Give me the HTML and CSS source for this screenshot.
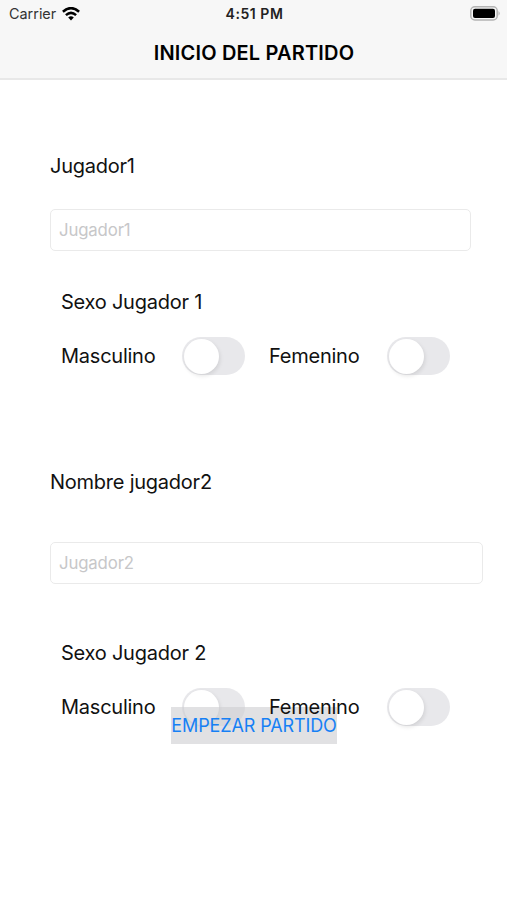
FILE: index.html
```html
<!DOCTYPE html>
<html lang="es">
<head>
<meta charset="utf-8">
<title>Inicio del partido</title>
<link rel="stylesheet" href="styles.css">
</head>
<body>
<header class="top">
  <div class="status">
    <div class="carrier"><span>Carrier</span>
      <svg class="wifi" viewBox="0 0 18 14" width="18" height="14"><g fill="none" stroke="#000" stroke-width="2.5"><path d="M.9 4.7Q9-2.5 17.1 4.7"/><path d="M3.9 8.1Q9 3.6 14.1 8.1"/></g><path d="M6.2 10.6Q9 8.1 11.8 10.6L9 13.4Z"/></svg>
    </div>
    <span class="time">4:51 PM</span>
    <svg class="battery" viewBox="0 0 31 15" width="31" height="15"><rect x=".8" y=".8" width="26.4" height="13.2" rx="4" fill="#f7f7f7" stroke="#b4b4b4" stroke-width="1.5"/><rect x="3" y="2.8" width="22" height="9.2" rx="2"/><path d="M28.5 5Q31 7.4 28.5 9.8Z" fill="#b4b4b4"/></svg>
  </div>
  <h1 class="title">INICIO DEL PARTIDO</h1>
</header>
<main class="form">
  <section class="player first">
    <label class="name" for="p1">Jugador1</label>
    <input class="field" id="p1" type="text" placeholder="Jugador1">
    <h2 class="gender">Sexo Jugador 1</h2>
    <div class="choices">
      <span class="male">Masculino</span><span class="switch"></span>
      <span class="female">Femenino</span><span class="switch"></span>
    </div>
  </section>
  <section class="player second">
    <label class="name" for="p2">Nombre jugador2</label>
    <input class="field" id="p2" type="text" placeholder="Jugador2">
    <h2 class="gender">Sexo Jugador 2</h2>
    <div class="choices">
      <span class="male">Masculino</span><span class="switch"></span>
      <span class="female">Femenino</span><span class="switch"></span>
    </div>
    <button class="start" type="button">EMPEZAR PARTIDO</button>
  </section>
</main>
</body>
</html>
```
FILE: styles.css
```css
* { box-sizing: border-box; }
body {
  margin: 0;
  height: 900px;
  overflow: hidden;
  background: #fff;
  color: #111;
  font: 400 20px/26px Inter, "Liberation Sans", sans-serif;
  letter-spacing: -.24px;
}
.top {
  height: 80px;
  background: #f7f7f7;
  border-bottom: 2px solid #e8e8e8;
}
.status {
  display: grid;
  grid-template-columns: 1fr auto 1fr;
  align-items: center;
  height: 27px;
  padding: 0 6px 0 9px;
  font-size: 14.4px;
  letter-spacing: 0;
}
.carrier { display: flex; align-items: center; gap: 6px; color: #333; }
.wifi { display: block; }
.time { margin-left: -1px; font-size: 14px; font-weight: 600; letter-spacing: .55px; color: #222; }
.battery { justify-self: end; }
.title {
  margin: 13px 0 0;
  padding-left: 1px;
  font-size: 20px;
  line-height: 26px;
  font-weight: 600;
  letter-spacing: .18px;
  text-align: center;
  white-space: nowrap;
  color: #000;
}
.player { position: relative; display: flex; flex-direction: column; padding-left: 50px; }
.first { padding-top: 73px; }
.second { padding-top: 94px; }
.name { height: 26px; white-space: nowrap; }
.field {
  width: 421px;
  height: 42px;
  margin: 30px 0 0;
  padding: 0 8px;
  border: 1px solid #eaeaea;
  border-radius: 5px;
  background: #fff;
  font: inherit;
  font-size: 16.8px;
  letter-spacing: -.15px;
}
.second .field { width: 433px; margin-top: 47px; }
.field::placeholder { color: #c7c7c9; opacity: 1; }
.gender { margin: 38px 0 0 11px; font-size: 20px; line-height: 26px; font-weight: 400; }
.second .gender { margin-top: 56px; }
.choices {
  display: grid;
  grid-template-columns: 121px 87px 118px 63px;
  align-items: center;
  height: 38px;
  margin: 22px 0 0 11px;
}
.female { position: relative; z-index: 2; }
.switch {
  display: flex;
  align-items: center;
  width: 63px;
  height: 38px;
  padding: 1.5px;
  border-radius: 19px;
  background: #e8e8eb;
}
.switch::before {
  content: "";
  width: 35px;
  height: 35px;
  border-radius: 50%;
  background: #fff;
  box-shadow: 1px 2px 4px rgba(0, 0, 0, .1);
}
.start {
  position: absolute;
  z-index: 1;
  left: 171px;
  bottom: -18px;
  width: 166px;
  height: 37px;
  padding: 0;
  border: 0;
  background: rgba(207, 207, 210, .62);
  color: #1680f5;
  font: inherit;
  font-size: 18px;
  letter-spacing: -.12px;
  white-space: nowrap;
}
```
